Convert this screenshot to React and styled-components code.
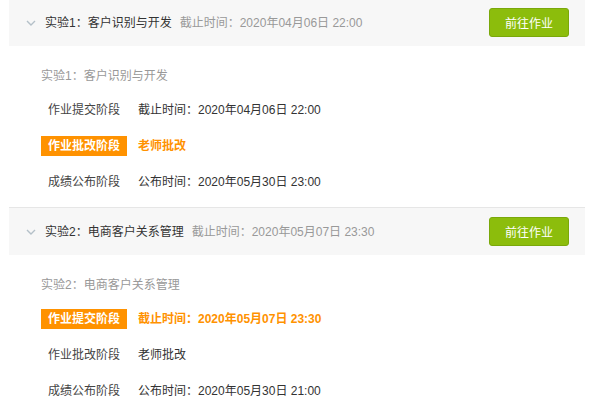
import React from "react";
import styled, { createGlobalStyle } from "styled-components";

const Global = createGlobalStyle`
  html, body { margin: 0; padding: 0; background: #fff; }
  body { font-family: "Liberation Sans", "Noto Sans CJK SC", Arial, sans-serif; font-size: 12px; color: #333; }
`;

const Page = styled.div`
  width: 576px;
  margin: -1px 0 0 9px;
`;

const Section = styled.section`
  border-top: ${(p) => (p.$first ? "none" : "1px solid #e6e6e6")};
`;

const Header = styled.div`
  height: 47px;
  background: #f7f7f7;
  display: flex;
  align-items: center;
  padding: 0 16px 0 17px;
  box-sizing: border-box;
`;

const Chevron = styled.svg`
  width: 10px;
  height: 6px;
  margin-right: 9px;
  flex: none;
`;

const Title = styled.span`
  color: #333;
  font-size: 12px;
  line-height: 20px;
`;

const Deadline = styled.span`
  color: #999;
  font-size: 12px;
  line-height: 20px;
  margin-left: 8px;
  flex: 1;
`;

const GoButton = styled.button`
  width: 80px;
  height: 29px;
  border: 1px solid #7aa80a;
  border-radius: 3px;
  background: #8cbd0c;
  color: #fff;
  font-family: inherit;
  font-size: 12px;
  padding: 0;
  cursor: pointer;
`;

const Body = styled.div`
  padding: 20px 0 7px 32px;
`;

const BodyTitle = styled.div`
  color: #999;
  font-size: 12px;
  line-height: 20px;
  margin-bottom: 6px;
`;

const Row = styled.div`
  height: 36px;
  display: flex;
  align-items: center;
`;

const Stage = styled.span`
  height: 20px;
  line-height: 20px;
  padding: 0 7px;
  margin-right: 11px;
  font-size: 12px;
  background: ${(p) => (p.$active ? "#ff9200" : "transparent")};
  color: ${(p) => (p.$active ? "#fff" : "#444")};
  font-weight: ${(p) => (p.$active ? 700 : 400)};
`;

const Value = styled.span`
  font-size: 12px;
  line-height: 20px;
  color: ${(p) => (p.$active ? "#ff9200" : "#333")};
  font-weight: ${(p) => (p.$active ? 700 : 400)};
`;

const ChevronIcon = () => (
  <Chevron viewBox="0 0 10 6">
    <path d="M1 1 L5 5 L9 1" fill="none" stroke="#b4c0c8" strokeWidth="1.4" />
  </Chevron>
);

const data = [
  {
    title: "实验1：客户识别与开发",
    deadline: "截止时间：2020年04月06日 22:00",
    rows: [
      { stage: "作业提交阶段", value: "截止时间：2020年04月06日 22:00" },
      { stage: "作业批改阶段", value: "老师批改", active: true },
      { stage: "成绩公布阶段", value: "公布时间：2020年05月30日 23:00" },
    ],
  },
  {
    title: "实验2：电商客户关系管理",
    deadline: "截止时间：2020年05月07日 23:30",
    rows: [
      { stage: "作业提交阶段", value: "截止时间：2020年05月07日 23:30", active: true },
      { stage: "作业批改阶段", value: "老师批改" },
      { stage: "成绩公布阶段", value: "公布时间：2020年05月30日 21:00" },
    ],
  },
];

export default function App() {
  return (
    <>
      <Global />
      <Page>
        {data.map((s, i) => (
          <Section key={i} $first={i === 0}>
            <Header>
              <ChevronIcon />
              <Title>{s.title}</Title>
              <Deadline>{s.deadline}</Deadline>
              <GoButton>前往作业</GoButton>
            </Header>
            <Body>
              <BodyTitle>{s.title}</BodyTitle>
              {s.rows.map((r, j) => (
                <Row key={j}>
                  <Stage $active={r.active}>{r.stage}</Stage>
                  <Value $active={r.active}>{r.value}</Value>
                </Row>
              ))}
            </Body>
          </Section>
        ))}
      </Page>
    </>
  );
}
